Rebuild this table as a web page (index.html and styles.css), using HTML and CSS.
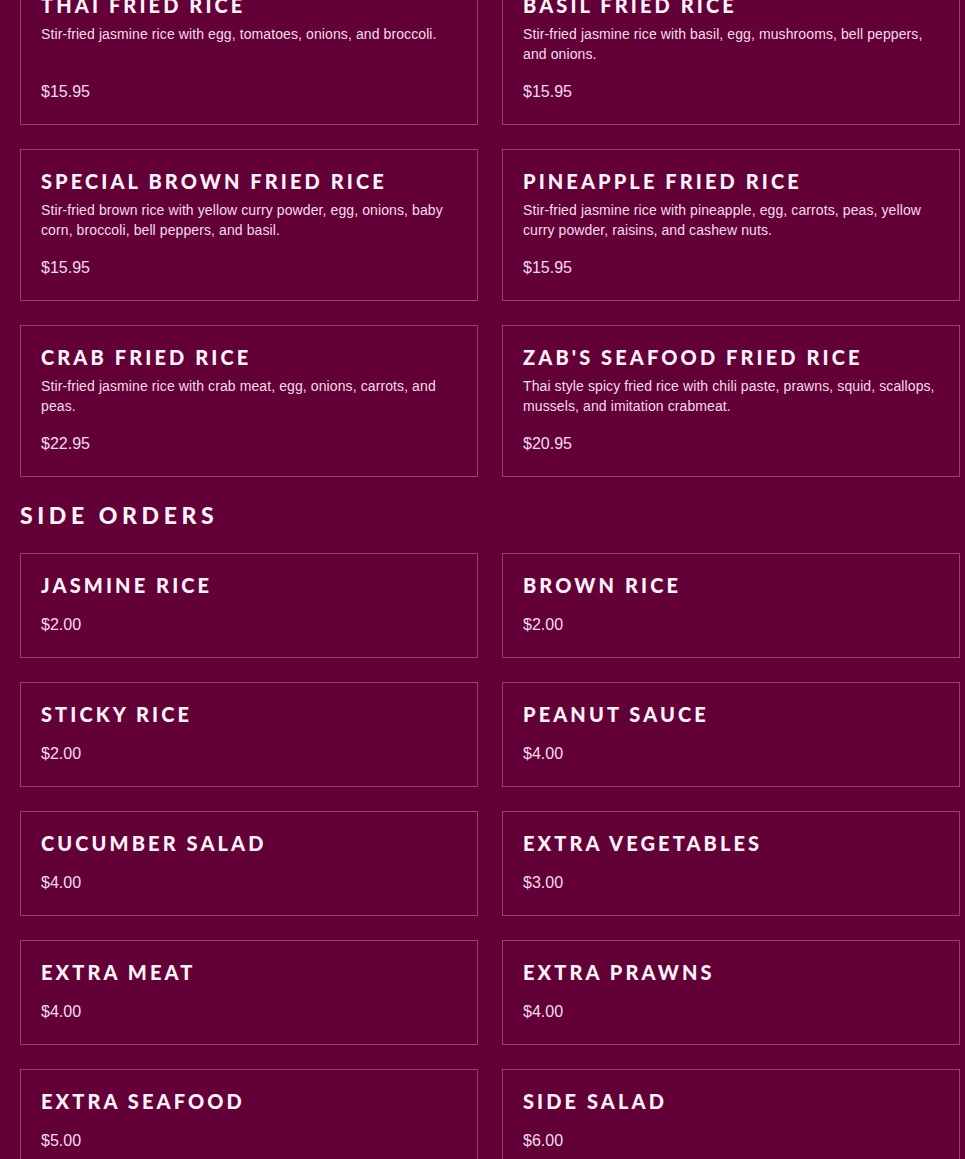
FILE: index.html
```html
<!DOCTYPE html>
<html lang="en">
<head>
<meta charset="utf-8">
<title>Menu</title>
<link rel="stylesheet" href="styles.css">
</head>
<body>
<main class="menu">
  <section class="section section-first">
    <div class="grid">
      <article class="card">
        <h3 class="item-title">THAI FRIED RICE</h3>
        <p class="item-desc">Stir-fried jasmine rice with egg, tomatoes, onions, and broccoli.</p>
        <p class="item-price">$15.95</p>
      </article>
      <article class="card">
        <h3 class="item-title">BASIL FRIED RICE</h3>
        <p class="item-desc">Stir-fried jasmine rice with basil, egg, mushrooms, bell peppers, and onions.</p>
        <p class="item-price">$15.95</p>
      </article>
      <article class="card">
        <h3 class="item-title">SPECIAL BROWN FRIED RICE</h3>
        <p class="item-desc">Stir-fried brown rice with yellow curry powder, egg, onions, baby corn, broccoli, bell peppers, and basil.</p>
        <p class="item-price">$15.95</p>
      </article>
      <article class="card">
        <h3 class="item-title">PINEAPPLE FRIED RICE</h3>
        <p class="item-desc">Stir-fried jasmine rice with pineapple, egg, carrots, peas, yellow curry powder, raisins, and cashew nuts.</p>
        <p class="item-price">$15.95</p>
      </article>
      <article class="card">
        <h3 class="item-title">CRAB FRIED RICE</h3>
        <p class="item-desc">Stir-fried jasmine rice with crab meat, egg, onions, carrots, and peas.</p>
        <p class="item-price">$22.95</p>
      </article>
      <article class="card">
        <h3 class="item-title">ZAB'S SEAFOOD FRIED RICE</h3>
        <p class="item-desc">Thai style spicy fried rice with chili paste, prawns, squid, scallops, mussels, and imitation crabmeat.</p>
        <p class="item-price">$20.95</p>
      </article>
    </div>
  </section>

  <section class="section">
    <h2 class="section-title">SIDE ORDERS</h2>
    <div class="grid">
      <article class="card"><h3 class="item-title">JASMINE RICE</h3><p class="item-price">$2.00</p></article>
      <article class="card"><h3 class="item-title">BROWN RICE</h3><p class="item-price">$2.00</p></article>
      <article class="card"><h3 class="item-title">STICKY RICE</h3><p class="item-price">$2.00</p></article>
      <article class="card"><h3 class="item-title">PEANUT SAUCE</h3><p class="item-price">$4.00</p></article>
      <article class="card"><h3 class="item-title">CUCUMBER SALAD</h3><p class="item-price">$4.00</p></article>
      <article class="card"><h3 class="item-title">EXTRA VEGETABLES</h3><p class="item-price">$3.00</p></article>
      <article class="card"><h3 class="item-title">EXTRA MEAT</h3><p class="item-price">$4.00</p></article>
      <article class="card"><h3 class="item-title">EXTRA PRAWNS</h3><p class="item-price">$4.00</p></article>
      <article class="card"><h3 class="item-title">EXTRA SEAFOOD</h3><p class="item-price">$5.00</p></article>
      <article class="card"><h3 class="item-title">SIDE SALAD</h3><p class="item-price">$6.00</p></article>
    </div>
  </section>
</main>
</body>
</html>
```

FILE: styles.css
```css
html, body {
  margin: 0;
  padding: 0;
  background: #630037;
}

body {
  font-family: "Liberation Sans", Arial, sans-serif;
  color: #f6e4ee;
}

.menu {
  width: 940px;
  padding: 0 0 40px 20px;
  margin-top: -27px;
}

.section + .section {
  margin-top: 24px;
}

.section-title {
  margin: 0 0 24px 0;
  font-family: "Lato", "DejaVu Sans", sans-serif;
  font-weight: 900;
  font-size: 23px;
  line-height: 28px;
  letter-spacing: 4.6px;
  color: #fdf3f8;
}

.grid {
  display: grid;
  grid-template-columns: 1fr 1fr;
  gap: 24px;
}

.card {
  display: flex;
  flex-direction: column;
  border: 1px solid #8d4571;
  padding: 19px 20px 23px 20px;
}

.item-title {
  margin: 0;
  font-family: "Lato", "DejaVu Sans", sans-serif;
  font-weight: 900;
  font-size: 20px;
  line-height: 24px;
  letter-spacing: 3.1px;
  color: #fdf3f8;
  white-space: nowrap;
}

.item-desc {
  margin: 8px 0 0 0;
  font-size: 14px;
  line-height: 19.5px;
  letter-spacing: 0.1px;
  color: #f3dde9;
}

.item-price {
  margin: auto 0 0 0;
  padding-top: 18px;
  font-size: 16px;
  line-height: 19px;
  color: #f3dde9;
}
```
